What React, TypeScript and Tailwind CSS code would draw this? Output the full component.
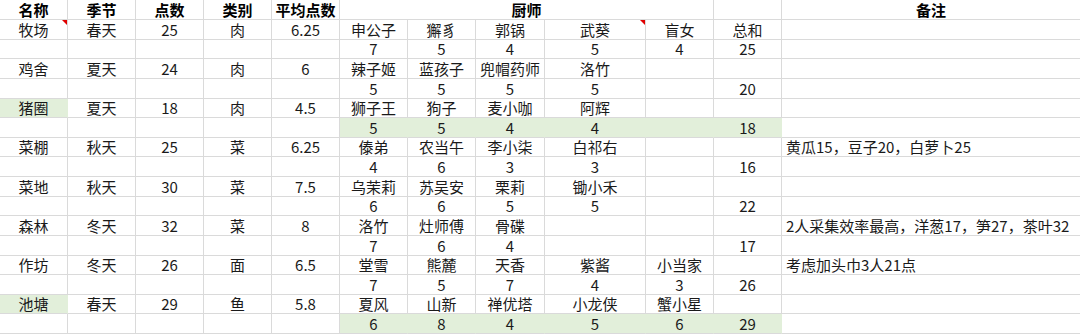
import React from "react";

const COLS = "68px 68px 68px 68px 68px 68px 68px 69px 101px 68px 68px 298px";

type Row = string[];

const rows: Row[] = [
  ["牧场", "春天", "25", "肉", "6.25", "申公子", "獬豸", "郭锅", "武葵", "盲女", "总和", ""],
  ["", "", "", "", "", "7", "5", "4", "5", "4", "25", ""],
  ["鸡舍", "夏天", "24", "肉", "6", "辣子姬", "蓝孩子", "兜帽药师", "洛竹", "", "", ""],
  ["", "", "", "", "", "5", "5", "5", "5", "", "20", ""],
  ["猪圈", "夏天", "18", "肉", "4.5", "狮子王", "狗子", "麦小咖", "阿辉", "", "", ""],
  ["", "", "", "", "", "5", "5", "4", "4", "", "18", ""],
  ["菜棚", "秋天", "25", "菜", "6.25", "傣弟", "农当午", "李小柒", "白祁右", "", "", "黄瓜15，豆子20，白萝卜25"],
  ["", "", "", "", "", "4", "6", "3", "3", "", "16", ""],
  ["菜地", "秋天", "30", "菜", "7.5", "乌茉莉", "苏吴安", "栗莉", "锄小禾", "", "", ""],
  ["", "", "", "", "", "6", "6", "5", "5", "", "22", ""],
  ["森林", "冬天", "32", "菜", "8", "洛竹", "灶师傅", "骨碟", "", "", "", "2人采集效率最高，洋葱17，笋27，茶叶32"],
  ["", "", "", "", "", "7", "6", "4", "", "", "17", ""],
  ["作坊", "冬天", "26", "面", "6.5", "堂雪", "熊麓", "天香", "紫酱", "小当家", "", "考虑加头巾3人21点"],
  ["", "", "", "", "", "7", "5", "7", "4", "3", "26", ""],
  ["池塘", "春天", "29", "鱼", "5.8", "夏风", "山新", "禅优塔", "小龙侠", "蟹小星", "", ""],
  ["", "", "", "", "", "6", "8", "4", "5", "6", "29", ""],
];

const isGreen = (r: number, c: number) =>
  ((r === 4 || r === 14) && c === 0) || ((r === 5 || r === 15) && c >= 5 && c <= 10);

const font = { fontFamily: '"Noto Sans CJK SC", "Noto Sans", sans-serif' };

export default function App() {
  return (
    <div className="w-[1080px] h-[334px] bg-white overflow-hidden text-[#1a1a1a]" style={font}>
      <div
        className="grid h-[334px] grid-rows-[20px_repeat(16,minmax(0,1fr))]"
        style={{ gridTemplateColumns: COLS }}
      >
        {["名称", "季节", "点数", "类别", "平均点数"].map((t) => (
          <div
            key={t}
            className="flex items-end justify-center border-r border-b border-[#dadada] text-[15px] leading-[18px] font-bold text-black"
          >
            {t}
          </div>
        ))}
        <div className="col-span-5 flex items-end justify-center border-r border-b border-[#dadada] text-[15px] leading-[18px] font-bold text-black">
          厨师
        </div>
        <div className="border-r border-b border-[#dadada]" />
        <div className="flex items-end justify-center border-b border-[#dadada] text-[15px] leading-[18px] font-bold text-black">
          备注
        </div>
        {rows.map((row, r) =>
          row.map((t, c) => {
            const g = isGreen(r, c);
            const last = c === 11;
            const cls =
              "relative flex items-end border-b text-[15px] leading-[18px] whitespace-nowrap " +
              (last ? "justify-start pl-[4px] " : "justify-center border-r ") +
              (g ? "bg-[#e2efda] border-b-[#dadada] border-r-[#e2efda] " : "border-[#dadada] ") +
              (g && c === 10 ? "border-r-[#dadada] " : "");
            return (
              <div key={r + "-" + c} className={cls}>
                {t}
                {r === 0 && (c === 0 || c === 8) && (
                  <span className="absolute right-0 top-0 w-0 h-0 border-t-[5px] border-l-[5px] border-t-[#e00000] border-l-transparent" />
                )}
              </div>
            );
          })
        )}
      </div>
    </div>
  );
}
